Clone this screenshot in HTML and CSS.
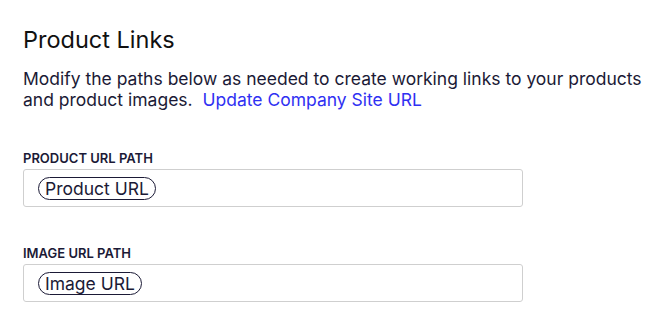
FILE: index.html
```html
<!DOCTYPE html>
<html>
<head>
<link rel="stylesheet" href="styles.css">
</head>

<body class="page">

<div class="section">
  <h2 class="title">Product Links</h2>
  <p class="intro">Modify the paths below as needed to create working links to your products and product images.&nbsp; <a class="link" href="#">Update Company Site URL</a></p>

  <div class="field">
    <label class="label">PRODUCT URL PATH</label>
    <div class="box">
      <span class="token">Product URL</span>
    </div>
  </div>

  <div class="field">
    <label class="label">IMAGE URL PATH</label>
    <div class="box">
      <span class="token">Image URL</span>
    </div>
  </div>
</div>

</body>
</html>
```

FILE: styles.css
```css
.page {
  margin: 0;
  background: #ffffff;
  font-family: Inter, "Noto Sans", sans-serif;
  color: #1b1a36;
}

.section {
  padding: 26px 0 0 23px;
}

.title {
  margin: 0;
  font-size: 23.5px;
  font-weight: 400;
  line-height: 28px;
  color: #111111;
}

.intro {
  margin: 14px 0 0 0;
  font-size: 17.5px;
  line-height: 21px;
  width: 625px;
}

.link {
  color: #3030f2;
  text-decoration: none;
}

.field {
  margin-top: 40px;
}

.field + .field {
  margin-top: 38px;
}

.label {
  display: block;
  font-size: 13px;
  font-weight: 600;
  line-height: 16px;
  margin-bottom: 3px;
}

.box {
  width: 500px;
  height: 38px;
  border: 1px solid #cfcfcf;
  border-radius: 3px;
  padding: 0 14px;
  box-sizing: border-box;
  display: flex;
  align-items: center;
}

.token {
  display: inline-block;
  border: 1px solid #1b1a36;
  border-radius: 12px;
  padding: 0 6px;
  font-size: 17.5px;
  line-height: 21px;
}
```
